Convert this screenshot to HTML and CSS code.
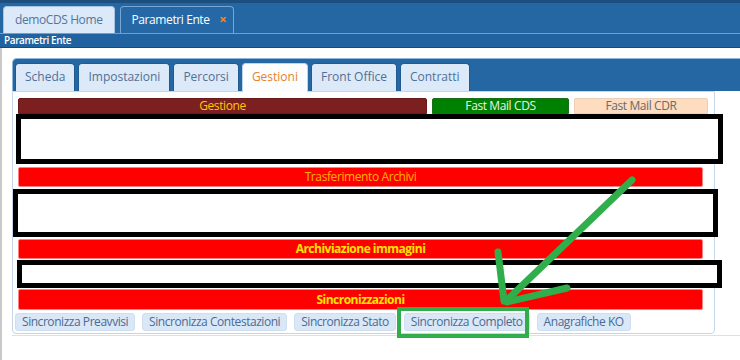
FILE: index.html
```html
<!DOCTYPE html>
<html lang="it">
<head>
  <meta charset="UTF-8">
  <meta name="viewport" content="width=device-width, initial-scale=1.0">
  <title>Parametri Ente</title>
  <link rel="stylesheet" href="styles.css">
</head>
<body>
  <div class="topbar">
    <div class="apptab">demoCDS Home</div>
    <div class="apptab apptab-active">Parametri Ente <span class="close">&#215;</span></div>
  </div>
  <div class="subbar">Parametri Ente</div>

  <div class="main">
    <div class="widget">
      <div class="tabs">
        <div class="tab">Scheda</div>
        <div class="tab">Impostazioni</div>
        <div class="tab">Percorsi</div>
        <div class="tab tab-active">Gestioni</div>
        <div class="tab">Front Office</div>
        <div class="tab">Contratti</div>
      </div>

      <div class="panel">
        <div class="row">
          <div class="head head-gestione">Gestione</div>
          <div class="head head-cds">Fast Mail CDS</div>
          <div class="head head-cdr">Fast Mail CDR</div>
        </div>
        <div class="mask mask-1"></div>
        <div class="bar bar-orange">Trasferimento Archivi</div>
        <div class="mask mask-2"></div>
        <div class="bar bar-bold bar-archivi">Archiviazione immagini</div>
        <div class="mask mask-3"></div>
        <div class="bar bar-bold bar-sync">Sincronizzazioni</div>
        <div class="buttons">
          <div class="btn">Sincronizza Preavvisi</div>
          <div class="btn">Sincronizza Contestazioni</div>
          <div class="btn">Sincronizza Stato</div>
          <div class="btn btn-completo">Sincronizza Completo</div>
          <div class="btn">Anagrafiche KO</div>
        </div>
      </div>
    </div>
  </div>

  <!-- annotazione verde sopra la pagina -->
  <svg class="annotation" width="740" height="360" viewBox="0 0 740 360">
    <rect x="399" y="309" width="128" height="27" fill="none" stroke="#2fae4b" stroke-width="4"/>
    <g stroke="#2fae4b" stroke-width="7" stroke-linecap="round" fill="none">
      <line x1="632" y1="180" x2="506" y2="301"/>
      <line x1="498" y1="252" x2="504" y2="301"/>
      <line x1="567" y1="288" x2="507" y2="302"/>
    </g>
  </svg>
</body>
</html>
```

FILE: styles.css
```css
body {
  margin: 0;
  font-family: "Open Sans", "Noto Sans", sans-serif;
  background-color: #fff;
}

.topbar {
  box-sizing: border-box;
  height: 34px;
  padding-left: 3px;
  display: flex;
  align-items: flex-end;
  gap: 5px;
  background-color: #2467a3;
  border-top: 3px solid #1c4f80;
  border-bottom: 1px solid #6d9fd0;
}

.apptab {
  box-sizing: border-box;
  height: 27px;
  line-height: 25px;
  padding: 0 11px;
  font-size: 12px;
  letter-spacing: -0.4px;
  color: #54759a;
  background-color: #dce9f9;
  border: 1px solid #a9c5e4;
  border-bottom: none;
  border-radius: 4px 4px 0 0;
}

.apptab-active {
  padding: 0 7px 0 11px;
  color: #fff;
  background-color: #2568a5;
  border-color: #79a6d2;
}

.close {
  margin-left: 7px;
  color: #f08a24;
  font-weight: bold;
  font-size: 13px;
}

.subbar {
  box-sizing: border-box;
  height: 14px;
  line-height: 13px;
  padding-left: 4px;
  font-size: 10px;
  font-weight: 600;
  letter-spacing: -0.4px;
  color: #fff;
  background-color: #2163a0;
  border-bottom: 1px solid #1a4b78;
}

.main {
  padding-top: 10px;
  border-left: 2px solid #c8c8c8;
  padding-left: 10px;
  height: 302px;
}

.widget {
  border-bottom: 1px solid #d5e2ef;
  padding-bottom: 1px;
}

.tabs {
  box-sizing: border-box;
  height: 33px;
  padding-left: 2px;
  display: flex;
  align-items: flex-end;
  gap: 3px;
  background-color: #2467a3;
  border-top: 1px solid #8fb3d9;
  border-left: 1px solid #8fb3d9;
  border-top-left-radius: 5px;
}

.tab {
  box-sizing: border-box;
  height: 28px;
  line-height: 26px;
  padding: 0 9px;
  font-size: 12px;
  color: #4f7097;
  background-color: #dce9f8;
  border: 1px solid #1f5a92;
  border-bottom: none;
  border-radius: 4px 4px 0 0;
}

.tab-active {
  height: 29px;
  margin-bottom: -1px;
  color: #e8822d;
  background-color: #fbfdff;
  border-color: #bcd3ea;
}

.panel {
  box-sizing: border-box;
  width: 703px;
  padding: 6px 11px 2px 5px;
  border: 1px solid #c3d6ea;
  border-radius: 0 0 4px 4px;
  background-color: #fff;
}

.row {
  display: flex;
  gap: 5px;
  height: 16px;
}

.head {
  box-sizing: border-box;
  height: 16px;
  line-height: 14px;
  text-align: center;
  font-size: 12px;
  letter-spacing: -0.4px;
  border: 1px solid;
  border-radius: 2px 2px 0 0;
}

.head-gestione {
  width: 409px;
  flex-shrink: 0;
  color: #ffc800;
  background-color: #7c1f1f;
  border-color: #6a1818;
}

.head-cds {
  width: 137px;
  flex-shrink: 0;
  color: #eaf6ea;
  background-color: #008000;
  border-color: #1a6d1a;
}

.head-cdr {
  width: 134px;
  flex-shrink: 0;
  color: #6a6a6a;
  background-color: #fddcc0;
  border-color: #ead0b8;
}

.mask {
  box-sizing: border-box;
  border: 5px solid #000;
  background-color: #fff;
}

.mask-1 {
  width: 707px;
  height: 50px;
  margin-left: -2px;
}

.mask-2 {
  width: 705px;
  height: 48px;
  margin-top: 2px;
  margin-left: -5px;
}

.mask-3 {
  width: 705px;
  height: 28px;
  margin-top: 1px;
  margin-left: -1px;
}

.bar {
  box-sizing: border-box;
  height: 20px;
  line-height: 18px;
  margin-top: 3px;
  text-align: center;
  font-size: 12px;
  letter-spacing: -0.4px;
  background-color: #ff0000;
  border: 1px solid #ff8080;
  border-radius: 2px;
}

.bar-orange {
  color: #ffb400;
}

.bar-bold {
  color: #ffe400;
  font-weight: bold;
  letter-spacing: -0.5px;
}

.bar-archivi {
  margin-top: 2px;
}

.bar-sync {
  height: 21px;
  line-height: 19px;
  margin-top: 1px;
}

.buttons {
  display: flex;
  gap: 7px;
  margin-top: 3px;
  margin-left: -3px;
}

.btn {
  box-sizing: border-box;
  height: 18px;
  line-height: 16px;
  padding: 0 6px;
  font-size: 12px;
  letter-spacing: -0.45px;
  white-space: nowrap;
  color: #4a6b92;
  background-color: #dae7f7;
  border: 1px solid #cfdff2;
  border-radius: 3px;
}

.btn-completo {
  margin-left: 1px;
}

.annotation {
  position: absolute;
  top: 0;
  left: 0;
  pointer-events: none;
}
```
